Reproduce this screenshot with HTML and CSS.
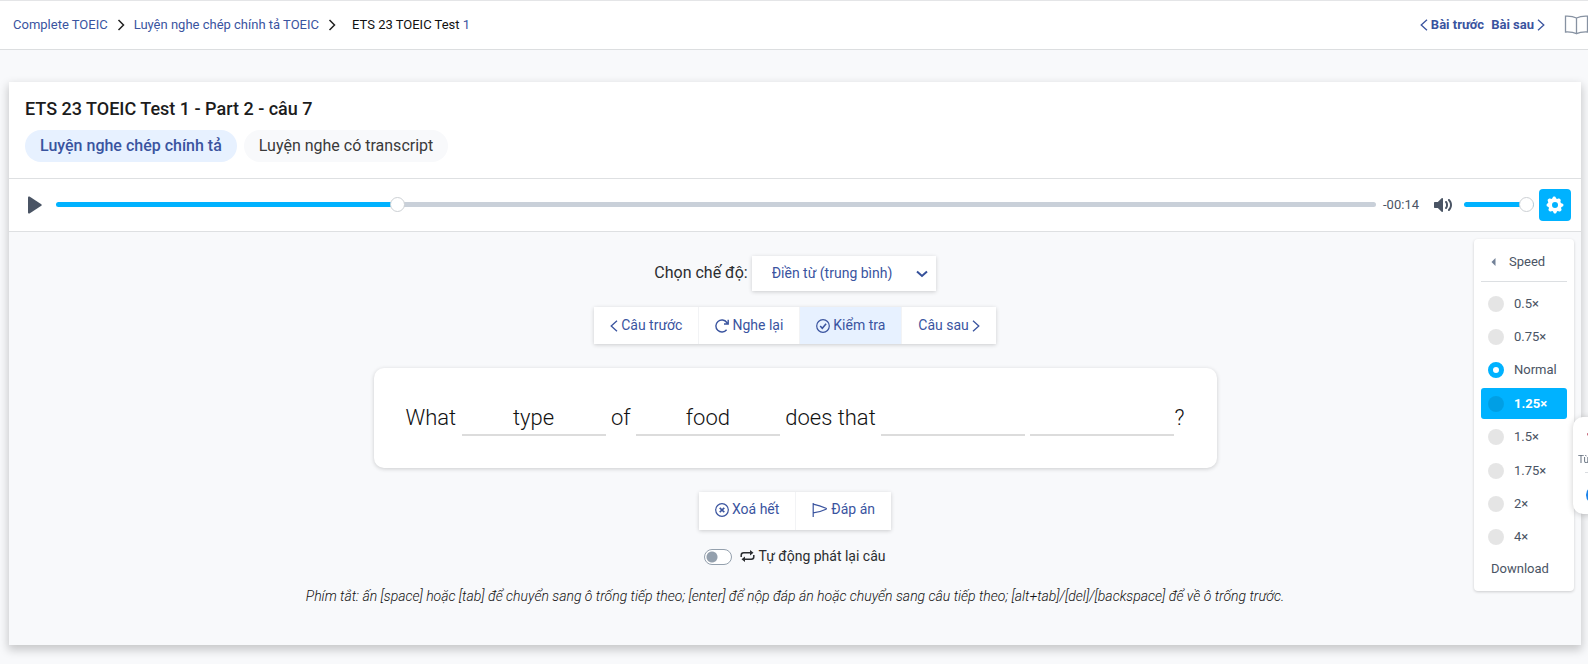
FILE: index.html
```html
<!DOCTYPE html>
<html lang="vi">
<head>
<meta charset="utf-8">
<meta name="viewport" content="width=device-width, initial-scale=1">
<title>ETS 23 TOEIC Test 1 - Part 2 - câu 7</title>
<link rel="stylesheet" href="styles.css">
</head>
<body>
<header class="topbar">
  <nav class="breadcrumb" aria-label="Breadcrumb">
    <a href="#">Complete TOEIC</a>
    <svg class="sep" viewBox="0 0 8 12"><path d="M1.5 1 6.5 6l-5 5"/></svg>
    <a href="#">Luyện nghe chép chính tả TOEIC</a>
    <svg class="sep" viewBox="0 0 8 12"><path d="M1.5 1 6.5 6l-5 5"/></svg>
    <a href="#" class="current">ETS 23 TOEIC Test <span class="num">1</span></a>
  </nav>
  <nav class="lesson-nav" aria-label="Bài học">
    <a href="#"><svg class="chev" viewBox="0 0 8 12"><path d="M7 .8 1.2 6 7 11.200"/></svg>Bài trước</a>
    <a href="#">Bài sau<svg class="chev" viewBox="0 0 8 12"><path d="M1 .8 6.800 6 1 11.200"/></svg></a>
    <a href="#" class="book" aria-label="Sổ từ"><svg viewBox="0 0 24 20"><path d="M12 3C9 1.500 5 1 1 1.200V17c4-.2 8 .2 11 1.700 3-1.500 7-1.900 11-1.700V1.200C19 1 15 1.500 12 3v15.500"/></svg></a>
  </nav>
</header>

<main class="panel">
  <section class="panel-head">
    <h1>ETS 23 TOEIC Test 1 - Part 2 - câu 7</h1>
    <div class="tabs">
      <a href="#" class="tab active">Luyện nghe chép chính tả</a>
      <a href="#" class="tab">Luyện nghe có transcript</a>
    </div>
  </section>

  <section class="player">
    <button class="play" type="button" aria-label="Play"><svg viewBox="0 0 14 18"><path d="M0 1.500Q0 0 1.500.6L13.300 8.200q.9.800 0 1.600L1.500 17.400Q0 18 0 16.500z"/></svg></button>
    <input class="range seek" type="range" min="0" max="1000" value="256" aria-label="Seek">
    <span class="time">-00:14</span>
    <button class="mute" type="button" aria-label="Mute"><svg viewBox="0 0 18 18"><path d="M15.600 3.300c-.4-.4-1-.4-1.400 0s-.4 1 0 1.400C15.400 5.900 16 7.400 16 9s-.6 3.100-1.800 4.300c-.4.4-.4 1 0 1.400.2.200.5.300.7.300.3 0 .5-.1.700-.3C17.100 13.200 18 11.200 18 9s-.9-4.200-2.400-5.700z"/><path d="M11.300 5.300c-.4.400-.4 1 0 1.400C12 7.300 12 8.100 12 9c0 .9 0 1.700-.7 2.300-.4.400-.4 1 0 1.400.2.200.5.300.7.300s.5-.1.700-.3C13.700 11.600 14 10.300 14 9s-.3-2.600-1.300-3.700c-.4-.4-1-.4-1.400 0zM3.800 6H.7c-.4 0-.7.300-.7.700v4.600c0 .4.300.7.700.7h3.100l4.100 3.900c.4.300 1.100 0 1.100-.6V2.700c0-.6-.7-.9-1.100-.6z"/></svg></button>
    <input class="range volume" type="range" min="0" max="100" value="100" aria-label="Volume">
    <div class="settings-wrap">
      <button class="settings" type="button" aria-label="Settings" aria-expanded="true"><svg viewBox="0 0 18 18"><path d="M16.100 7.500a1.800 1.800 0 0 1-1.500-2.600c.3-.5.2-1-.1-1.300l-.9-.9c-.3-.3-.9-.4-1.300-.1a1.800 1.800 0 0 1-2.600-1.100c-.1-.5-.6-.9-1.100-.9h-.8c-.5 0-.9.400-1.100.9a1.800 1.800 0 0 1-2.600 1.100c-.5-.3-1-.2-1.300.1l-.9.900c-.3.3-.4.900-.1 1.300A1.800 1.800 0 0 1 1.500 7.500c-.5.100-.9.600-.9 1.100v.8c0 .5.400.9.900 1.100a1.800 1.800 0 0 1 1.100 2.600c-.3.500-.2 1 .1 1.300l.9.900c.3.300.9.400 1.300.1a1.800 1.800 0 0 1 2.600 1.100c.1.500.6.900 1.100.9h.8c.5 0 .9-.4 1.100-.9a1.800 1.800 0 0 1 2.600-1.100c.5.300 1 .2 1.300-.1l.9-.9c.3-.3.400-.9.100-1.300a1.800 1.800 0 0 1 1.100-2.600c.5-.1.900-.6.900-1.100v-.8c0-.5-.4-.9-1.300-1.100zM9 12a3 3 0 1 1 0-6 3 3 0 0 1 0 6z"/></svg></button>
      <div class="menu">
        <button type="button" class="menu-back"><svg viewBox="0 0 4 8"><path d="M4 0v8L0 4z"/></svg>Speed</button>
        <div class="speeds">
          <label class="speed"><input type="radio" name="speed">0.5×</label>
          <label class="speed"><input type="radio" name="speed">0.75×</label>
          <label class="speed"><input type="radio" name="speed" checked>Normal</label>
          <label class="speed hover"><input type="radio" name="speed">1.25×</label>
          <label class="speed"><input type="radio" name="speed">1.5×</label>
          <label class="speed"><input type="radio" name="speed">1.75×</label>
          <label class="speed"><input type="radio" name="speed">2×</label>
          <label class="speed"><input type="radio" name="speed">4×</label>
        </div>
        <a href="#" class="download">Download</a>
      </div>
    </div>
  </section>

  <section class="exercise">
    <div class="mode">
      <label for="mode">Chọn chế độ:</label>
      <span class="select-wrap">
        <select id="mode"><option>Điền từ (trung bình)</option></select>
        <svg viewBox="0 0 12 8"><path d="M1 1.500 6 6l5-4.500"/></svg>
      </span>
    </div>

    <div class="group">
      <button type="button"><svg class="chev" viewBox="0 0 8 12"><path d="M7 .8 1.200 6 7 11.200"/></svg>Câu trước</button>
      <button type="button"><svg class="ico" viewBox="0 0 14 14"><path d="M11.600 10.700A6 6 0 1 1 11.800 3.500L13 5M13.200.7V5H9" stroke-width="1.400"/></svg>Nghe lại</button>
      <button type="button" class="primary"><svg class="ico" viewBox="0 0 14 14"><circle cx="7" cy="7" r="6.300"/><path d="m4.200 7 2.100 2.300 3.800-4.600" stroke-width="1.500"/></svg>Kiểm tra</button>
      <button type="button">Câu sau<svg class="chev" viewBox="0 0 8 12"><path d="M1 .8 6.800 6 1 11.200"/></svg></button>
    </div>

    <form class="sentence">
      What <input type="text" value="type" aria-label="Từ 2"> of <input type="text" value="food" aria-label="Từ 4"> does that <input type="text" aria-label="Từ 7"> <input type="text" aria-label="Từ 8">?
    </form>

    <div class="group tall">
      <button type="button"><svg class="ico" viewBox="0 0 14 14"><circle cx="7" cy="7" r="6.300"/><path d="m4.700 4.900 4.600 4.200M9.300 4.900 4.700 9.100" stroke-width="1.600"/></svg>Xoá hết</button>
      <button type="button"><svg class="ico flag" viewBox="0 0 16 14"><path d="M1.200 0v14M1.200 1.200q6.500 1.300 12.800 4.100.9.500 0 1-6 3-12.800 3.500"/></svg>Đáp án</button>
    </div>

    <label class="repeat"><input type="checkbox" role="switch"><svg viewBox="0 0 15 12"><path d="M1.200 7V5.200q0-2.500 2.500-2.500h7.300M13.800 5v1.800q0 2.500-2.500 2.500H4"/><path class="fill" d="M10 0 13.500 2.700 10 5.400zM5 6.600 1.500 9.300 5 12z"/></svg>Tự động phát lại câu</label>

    <p class="hint">Phím tắt: ấn [space] hoặc [tab] để chuyển sang ô trống tiếp theo; [enter] để nộp đáp án hoặc chuyển sang câu tiếp theo; [alt+tab]/[del]/[backspace] để về ô trống trước.</p>
  </section>
</main>

<aside class="dock">
  <svg class="dock-mark" viewBox="0 0 24 20"><path d="M0 3 8 18 16 3"/></svg>
  <span>Từ điển</span>
  <i></i>
  <b></b>
</aside>
</body>
</html>
```
FILE: styles.css
```css
* { box-sizing: border-box; }
body {
  margin: 0;
  min-height: 100vh;
  overflow: hidden;
  background: #f8f9fb;
  color: #2b2d30;
  font: 16px/24px Roboto, "Noto Sans", sans-serif;
}
a { color: #3a549f; text-decoration: none; }
button, input, select { font-family: inherit; }
button { border: 0; padding: 0; background: none; cursor: pointer; }
svg { flex: none; fill: none; stroke: currentColor; }

.topbar {
  display: flex;
  justify-content: space-between;
  align-items: center;
  height: 50px;
  padding-left: 13px;
  background: #fff;
  border-top: 1px solid #e4e5e7;
  border-bottom: 1px solid #dcdee0;
  font-size: 13px;
  line-height: 20px;
  overflow: hidden;
}
.breadcrumb, .lesson-nav { display: flex; align-items: center; white-space: nowrap; }
.breadcrumb { gap: 9px; }
.breadcrumb .current { color: #111; margin-left: 7px; }
.breadcrumb .num { color: #3a549f; }
.sep { width: 8px; height: 12px; color: #222; stroke-width: 1.500; }
.chev { width: 8px; height: 12px; stroke-width: 1.300; }
.lesson-nav { gap: 7px; font-weight: 700; }
.lesson-nav a { display: flex; align-items: center; gap: 3px; }
.lesson-nav .book { margin: 0 -1px 0 12px; color: #8792a2; }
.book svg { width: 25px; height: 20px; stroke-width: 1.300; }

.panel {
  margin: 32px 7px 18px 9px;
  background: #fff;
  box-shadow: 0 4px 9px 1px rgba(0, 0, 0, .2);
}
.panel-head { padding: 14px 16px 16px; border-bottom: 1px solid #dee0e2; }
h1 { margin: 0 0 8px; font-size: 18px; line-height: 26px; font-weight: 500; color: #1c1c1c; }
.tabs { display: flex; gap: 7px; }
.tab { padding: 4px 15px; border-radius: 16px; background: #f8f9fb; color: #3a3a3a; }
.tab.active { background: #e7f1ff; color: #3a549f; font-weight: 500; }

.player {
  display: flex;
  align-items: center;
  height: 53px;
  padding: 0 10px 0 19px;
  border-bottom: 1px solid #dee0e2;
  color: #4a5464;
}
.player button { display: grid; place-items: center; color: inherit; }
.player button svg { fill: currentColor; stroke: none; }
.play svg { width: 14px; height: 18px; }
.mute svg { width: 18px; height: 18px; }
.time { margin: 0 15px 0 7px; font-size: 13px; line-height: 20px; }
.range {
  appearance: none;
  min-width: 0;
  height: 20px;
  margin: 0 0 2px;
  background: none;
  --fill: 100%;
}
.range::-webkit-slider-runnable-track {
  height: 5px;
  border-radius: 3px;
  background: linear-gradient(to right, #00b2ff var(--fill), #c9d0d9 var(--fill));
}
.range::-webkit-slider-thumb {
  appearance: none;
  width: 15px;
  height: 15px;
  margin-top: -5px;
  border-radius: 50%;
  background: #fff;
  border: 1px solid #ccd0d4;
}
.seek { flex: 1; margin-left: 14px; --fill: 26%; }
.volume { width: 70px; margin: 0 5px 2px 12px; }
.settings-wrap { position: relative; }
.player .settings { width: 32px; height: 32px; border-radius: 4px; background: #00b2ff; color: #fff; }
.settings svg { width: 18px; height: 18px; }

.menu {
  position: absolute;
  z-index: 2;
  top: 50px;
  right: -3px;
  width: 100px;
  padding: 7px;
  border-radius: 4px;
  background: #fff;
  box-shadow: 0 1px 3px rgba(0, 0, 0, .18);
  font-size: 13px;
  line-height: 18px;
}
.player .menu-back {
  display: flex;
  align-items: center;
  gap: 13px;
  width: 100%;
  height: 36px;
  padding: 0 0 4px 10px;
  border-bottom: 1px solid #dcdfe2;
  font-size: 13px;
}
.player .menu-back svg { width: 5px; height: 8px; color: #728197; }
.speeds {
  display: flex;
  flex-direction: column;
  justify-content: space-between;
  height: 265px;
  margin: 6px 0 1px;
}
.speed {
  display: flex;
  align-items: center;
  gap: 10px;
  height: 31px;
  padding: 0 7px;
  border-radius: 3px;
}
.speed input {
  appearance: none;
  flex: none;
  width: 16px;
  height: 16px;
  margin: 0;
  border-radius: 50%;
  background: rgba(0, 0, 0, .1);
}
.speed input:checked { background: #fff; border: 5px solid #00b2ff; }
.speed.hover { background: #00b2ff; color: #fff; font-weight: 700; }
.download { display: block; padding: 6px 10px; color: #4a5464; }

.exercise {
  display: flex;
  flex-direction: column;
  align-items: center;
  padding: 24px 16px 38px;
  background: #f8f9fb;
}
.mode { display: flex; align-items: center; gap: 4px; }
.mode label { margin-bottom: 2px; }
.select-wrap { position: relative; }
.select-wrap select {
  appearance: none;
  display: block;
  width: 184px;
  height: 35px;
  padding: 0 40px 2px 20px;
  border: 0;
  background: #fff;
  color: #3a549f;
  font-size: 14px;
  box-shadow: 0 1px 4px rgba(0, 0, 0, .18);
}
.select-wrap svg {
  position: absolute;
  right: 8px;
  top: 14px;
  width: 12px;
  height: 8px;
  color: #35509a;
  stroke-width: 2;
  pointer-events: none;
}
.group {
  display: flex;
  margin-top: 16px;
  background: #fff;
  box-shadow: 0 1px 4px rgba(0, 0, 0, .18);
}
.group button {
  display: flex;
  align-items: center;
  gap: 3px;
  height: 37px;
  padding: 0 16px;
  color: #3a549f;
  font-size: 14px;
  line-height: 21px;
}
.group.tall button { height: 38px; padding-bottom: 2px; }
.group button + button { border-left: 1px solid #f2f3f5; }
.group .primary { background: #e7f1ff; }
.ico { width: 14px; height: 14px; stroke-width: 1.200; }
.ico.flag { width: 16px; }

.sentence {
  margin: 24px 0 8px;
  padding: 33px 32px 32px;
  border-radius: 10px;
  background: #fff;
  box-shadow: 0 1px 4px rgba(0, 0, 0, .18);
  font-size: 22px;
  line-height: 34px;
  font-weight: 300;
  color: #111;
}
.sentence input {
  width: 144px;
  height: 34px;
  padding: 0;
  border: 0;
  border-bottom: 2px solid #dcdcdc;
  background: none;
  color: inherit;
  font-size: 22px;
  font-weight: inherit;
  text-align: center;
}

.repeat { display: flex; align-items: center; margin-top: 16px; font-size: 14px; line-height: 21px; }
.repeat input {
  appearance: none;
  width: 28px;
  height: 16px;
  margin: 2px 8px 0 0;
  border: 1px solid #94a0ad;
  border-radius: 8px;
  background: radial-gradient(circle at 7px 7px, #94a0ad 5px, #fff 6px);
}
.repeat svg { width: 15px; height: 12px; margin-right: 3px; stroke-width: 1.500; }
.repeat .fill { fill: currentColor; stroke: none; }
.hint {
  margin: 19px 0 0;
  font-size: 14px;
  line-height: 21px;
  font-style: italic;
  font-weight: 300;
  color: #111;
  text-align: center;
}

.dock {
  position: fixed;
  z-index: 3;
  top: 417px;
  right: -45px;
  width: 60px;
  height: 97px;
  padding: 12px 0 0 5px;
  border-radius: 10px;
  background: #fff;
  box-shadow: 0 1px 6px rgba(0, 0, 0, .2);
  color: #5f6b7a;
  font-size: 10px;
  line-height: 14px;
  white-space: nowrap;
}
.dock-mark { display: block; width: 20px; height: 16px; margin: 2px 0 6px 9px; color: #c2566b; stroke-width: 2; }
.dock span { display: block; }
.dock i { display: block; height: 1px; margin: 5px 0 12px 7px; background: #d9dce0; }
.dock b { display: block; width: 20px; height: 20px; margin: 0 0 0 8px; border-radius: 50%; background: #1a82ea; }
```
